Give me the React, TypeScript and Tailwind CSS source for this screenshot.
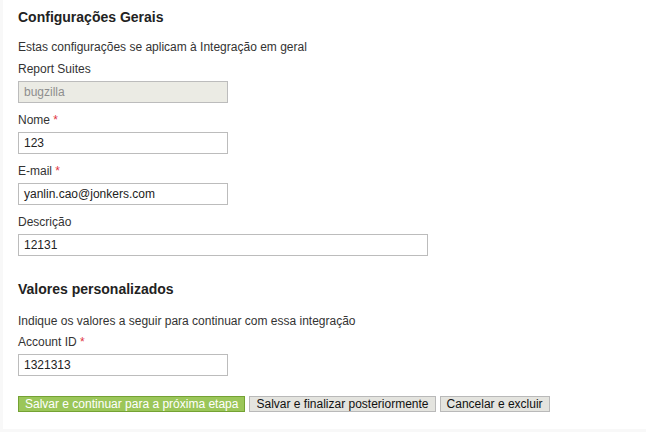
import React from "react";

const font = { fontFamily: '"Liberation Sans", Arial, sans-serif' };

function Label({ text, required }: { text: string; required?: boolean }) {
  return (
    <div className="text-[12px] leading-[14px] text-[#333] h-[14px]">
      {text}
      {required && <span className="text-[#e0353f]"> *</span>}
    </div>
  );
}

function Field({ value, width, disabled }: { value: string; width: string; disabled?: boolean }) {
  return (
    <div
      className={`${width} h-[22px] border border-[#bcbcbc] px-[5px] flex items-center text-[12px] ${
        disabled ? "bg-[#ebebe4] text-[#8e8e8e]" : "bg-white text-[#222]"
      }`}
    >
      {value}
    </div>
  );
}

export default function App() {
  return (
    <div className="w-[646px] h-[432px] bg-[#f8f8f8] flex" style={font}>
      <div className="ml-[3px] w-[643px] h-[429px] bg-white pl-[15px] pt-[9px]">
        <div className="text-[14px] leading-[16px] font-bold text-[#222]">Configurações Gerais</div>
        <div className="mt-[15px] text-[12px] leading-[14px] text-[#333]">
          Estas configurações se aplicam à Integração em geral
        </div>
        <div className="mt-[8px]">
          <Label text="Report Suites" />
        </div>
        <div className="mt-[5px]">
          <Field value="bugzilla" width="w-[210px]" disabled />
        </div>
        <div className="mt-[10px]">
          <Label text="Nome" required />
        </div>
        <div className="mt-[5px]">
          <Field value="123" width="w-[210px]" />
        </div>
        <div className="mt-[10px]">
          <Label text="E-mail" required />
        </div>
        <div className="mt-[5px]">
          <Field value="yanlin.cao@jonkers.com" width="w-[210px]" />
        </div>
        <div className="mt-[10px]">
          <Label text="Descrição" />
        </div>
        <div className="mt-[5px]">
          <Field value="12131" width="w-[410px]" />
        </div>
        <div className="mt-[25px] text-[14px] leading-[16px] font-bold text-[#222]">Valores personalizados</div>
        <div className="mt-[17px] text-[12px] leading-[14px] text-[#333]">
          Indique os valores a seguir para continuar com essa integração
        </div>
        <div className="mt-[7px]">
          <Label text="Account ID" required />
        </div>
        <div className="mt-[5px]">
          <Field value="1321313" width="w-[210px]" />
        </div>
        <div className="mt-[20px] flex gap-[4px]">
          <button className="h-[16px] px-[6px] border border-[#74a233] bg-[#9bc659] text-white text-[12px] leading-[14px] whitespace-nowrap">
            Salvar e continuar para a próxima etapa
          </button>
          <button className="h-[16px] px-[6px] border border-[#b9b9b9] bg-[#e4e4df] text-[#111] text-[12px] leading-[14px] whitespace-nowrap">
            Salvar e finalizar posteriormente
          </button>
          <button className="h-[16px] px-[6px] border border-[#b9b9b9] bg-[#e4e4df] text-[#111] text-[12px] leading-[14px] whitespace-nowrap">
            Cancelar e excluir
          </button>
        </div>
      </div>
    </div>
  );
}
